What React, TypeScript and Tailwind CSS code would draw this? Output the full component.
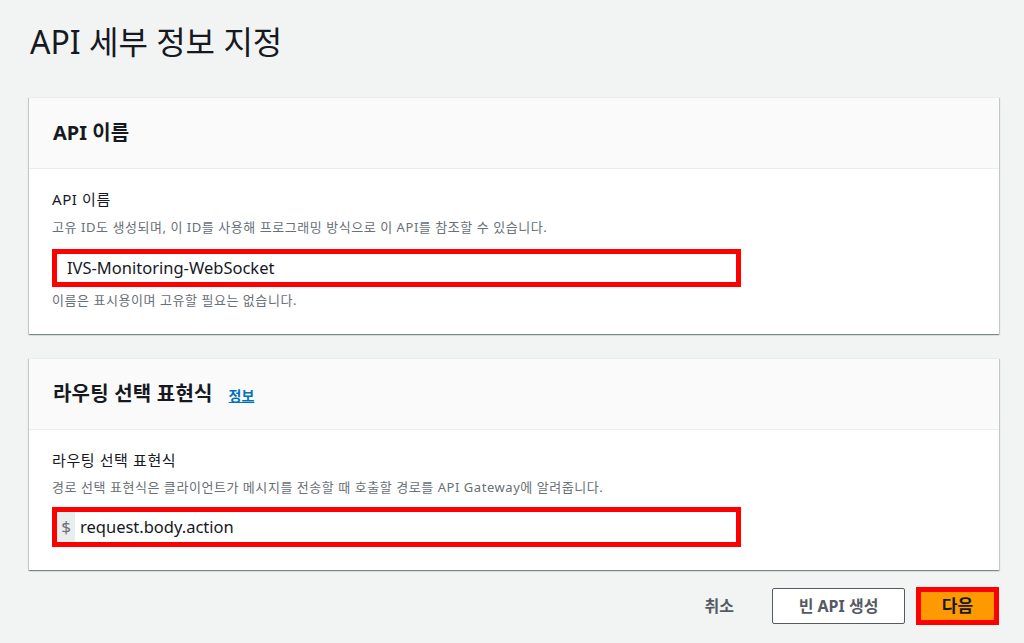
import React from "react";

const font = { fontFamily: '"Noto Sans", "Noto Sans CJK KR", sans-serif' };

function Card({ title, children }: { title: React.ReactNode; children: React.ReactNode }) {
  return (
    <div className="bg-white shadow-[0_1px_1px_0_rgba(0,28,36,0.3),1px_1px_1px_0_rgba(0,28,36,0.15),-1px_1px_1px_0_rgba(0,28,36,0.15)] border-t border-[#eaeded]">
      <div className="h-[71px] bg-[#fafafa] border-b border-[#eaeded] flex items-center px-[24px]">
        {title}
      </div>
      {children}
    </div>
  );
}

export default function App() {
  return (
    <div style={font} className="w-[1024px] h-[643px] bg-[#f2f3f3] text-[#16191f] overflow-hidden pl-[29px] pr-[25px]">
      <h1 className="pt-[20px] h-[97px] text-[32px] leading-[44px] font-normal pl-[1px]">API 세부 정보 지정</h1>

      <Card title={<span className="text-[20px] font-bold leading-[26px]">API 이름</span>}>
        <div className="px-[23px] pt-[19px] pb-[25px]">
          <div className="text-[15px] tracking-[0.6px] leading-[22px]">API 이름</div>
          <div className="text-[13px] tracking-[0.55px] leading-[18px] text-[#687078] mt-[8px]">
            고유 ID도 생성되며, 이 ID를 사용해 프로그래밍 방식으로 이 API를 참조할 수 있습니다.
          </div>
          <div className="mt-[13px] w-[689px] h-[38px] border-[5px] border-[#ff0000] bg-white flex items-center pl-[10px]">
            <span className="text-[16.5px] leading-[20px]">IVS-Monitoring-WebSocket</span>
          </div>
          <div className="text-[13px] tracking-[0.55px] leading-[18px] text-[#687078] mt-[4px]">
            이름은 표시용이며 고유할 필요는 없습니다.
          </div>
        </div>
      </Card>

      <div className="h-[24px]" />

      <Card
        title={
          <div className="flex items-center gap-[16px]">
            <span className="text-[20px] font-bold leading-[26px] tracking-[0.2px]">라우팅 선택 표현식</span>
            <span className="text-[14px] font-bold text-[#0073bb] underline leading-[18px] mt-[4px]">정보</span>
          </div>
        }
      >
        <div className="px-[23px] pt-[19px] pb-[23px]">
          <div className="text-[15px] tracking-[0.6px] leading-[22px]">라우팅 선택 표현식</div>
          <div className="text-[13px] tracking-[0.55px] leading-[18px] text-[#687078] mt-[7px]">
            경로 선택 표현식은 클라이언트가 메시지를 전송할 때 호출할 경로를 API Gateway에 알려줍니다.
          </div>
          <div className="mt-[11px] w-[689px] h-[40px] border-[5px] border-[#ff0000] bg-white flex items-stretch">
            <span className="w-[18px] bg-[#eaeded] text-[#687078] text-[17px] flex items-center justify-center">$</span>
            <span className="pl-[5px] text-[16.5px] leading-[20px] flex items-center">request.body.action</span>
          </div>
        </div>
      </Card>

      <div className="flex items-center justify-end pt-[17px]">
        <span className="text-[16px] font-bold text-[#545b64] mr-[38px]">취소</span>
        <div className="w-[133px] h-[36px] border border-[#545b64] rounded-[2px] bg-white flex items-center justify-center text-[16px] font-bold text-[#545b64]">
          빈 API 생성
        </div>
        <div className="ml-[11px] w-[83px] h-[38px] border-[5px] border-[#ff0000] bg-[#ff9900] flex items-center justify-center text-[17px] font-bold text-[#16191f]">
          다음
        </div>
      </div>
    </div>
  );
}
